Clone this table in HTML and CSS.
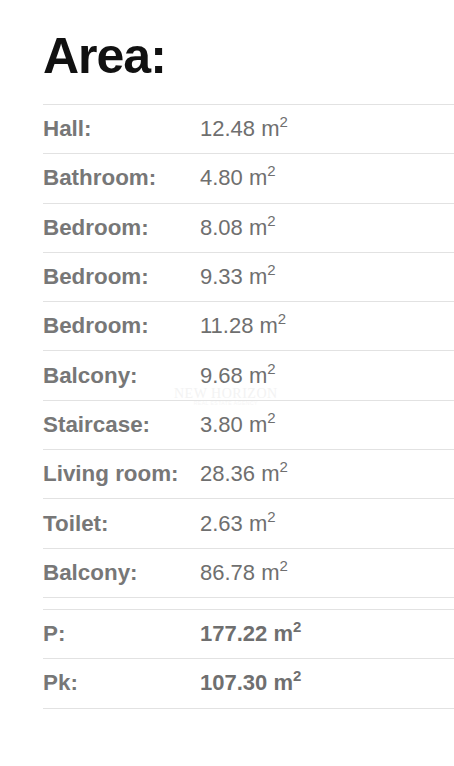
FILE: index.html
```html
<!DOCTYPE html>
<html>
<head>
<meta charset="utf-8">
<link rel="stylesheet" href="styles.css">
</head>
<body>
<div class="page">
  <h1 class="title">Area:</h1>
  <div class="table">
    <div class="row"><span class="label">Hall:</span><span class="value">12.48 m<sup>2</sup></span></div>
    <div class="row"><span class="label">Bathroom:</span><span class="value">4.80 m<sup>2</sup></span></div>
    <div class="row"><span class="label">Bedroom:</span><span class="value">8.08 m<sup>2</sup></span></div>
    <div class="row"><span class="label">Bedroom:</span><span class="value">9.33 m<sup>2</sup></span></div>
    <div class="row"><span class="label">Bedroom:</span><span class="value">11.28 m<sup>2</sup></span></div>
    <div class="row wm-row"><span class="label">Balcony:</span><span class="value">9.68 m<sup>2</sup></span><span class="watermark">NEW HORIZON<span class="wm-sub">REAL ESTATE AGENCY</span></span></div>
    <div class="row"><span class="label">Staircase:</span><span class="value">3.80 m<sup>2</sup></span></div>
    <div class="row"><span class="label">Living room:</span><span class="value">28.36 m<sup>2</sup></span></div>
    <div class="row"><span class="label">Toilet:</span><span class="value">2.63 m<sup>2</sup></span></div>
    <div class="row"><span class="label">Balcony:</span><span class="value">86.78 m<sup>2</sup></span></div>
  </div>
  <div class="table totals">
    <div class="row"><span class="label">P:</span><span class="value strong">177.22 m<sup>2</sup></span></div>
    <div class="row"><span class="label">Pk:</span><span class="value strong">107.30 m<sup>2</sup></span></div>
  </div>
</div>
</body>
</html>
```
FILE: styles.css
```css
html, body {
  margin: 0;
  padding: 0;
  background: #fff;
}
body {
  font-family: "Liberation Sans", Arial, sans-serif;
}
.page {
  padding: 30px 0 0 43px;
}
.title {
  margin: 0 0 22px 0;
  font-size: 50px;
  line-height: 52px;
  font-weight: 700;
  color: #111;
  letter-spacing: -1px;
}
.table {
  display: flex;
  flex-direction: column;
  border-bottom: 1px solid #e2e2e2;
}
.totals {
  margin-top: 11px;
}
.row {
  position: relative;
  display: flex;
  align-items: center;
  border-top: 1px solid #e2e2e2;
  padding: 8px 0;
  height: 32.3px;
}
.label {
  width: 157px;
  font-size: 22.4px;
  font-weight: 700;
  color: #777;
}
.value {
  font-size: 22px;
  color: #6f6f6f;
}
.value.strong {
  font-weight: 700;
  color: #6f6f6f;
}
sup {
  font-size: 15px;
  line-height: 0;
  vertical-align: 9px;
}
.watermark {
  position: absolute;
  left: 131px;
  top: 37px;
  font-family: "Liberation Serif", serif;
  font-size: 14px;
  color: #f3f3f3;
  letter-spacing: 0.5px;
  display: flex;
  flex-direction: column;
  align-items: center;
  line-height: 12px;
}
.wm-sub {
  font-size: 5px;
  line-height: 6px;
  color: #f6f6f6;
  font-family: "Liberation Sans", sans-serif;
}
```
